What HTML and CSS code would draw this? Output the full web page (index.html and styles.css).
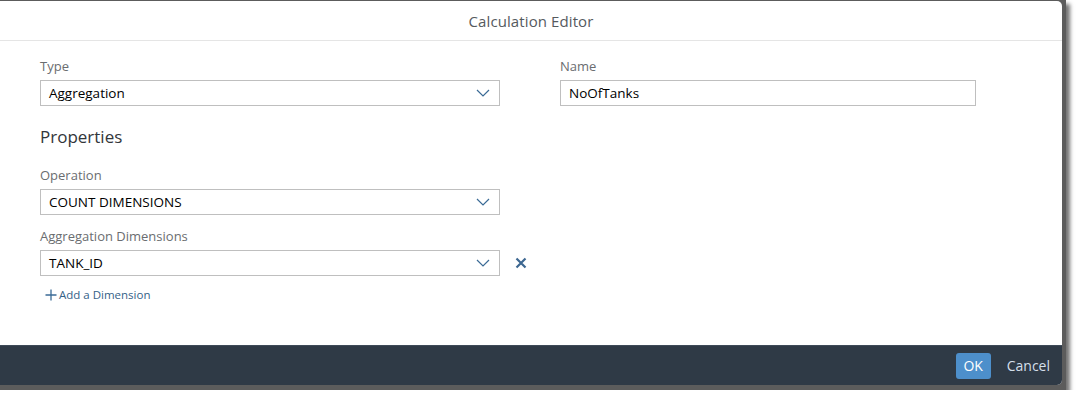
FILE: index.html
```html
<!DOCTYPE html>
<html>
<head>
<meta charset="utf-8">
<link rel="stylesheet" href="styles.css">
</head>
<body>
<div class="backdrop">
  <div class="dialog">
    <div class="header">Calculation Editor</div>
    <div class="content">
      <div class="row">
        <div class="field type-field">
          <div class="label">Type</div>
          <div class="select">
            <span class="value">Aggregation</span>
            <svg class="chev" width="14" height="8" viewBox="0 0 14 8"><path d="M1 1 L7 7 L13 1" fill="none" stroke="#3b6b96" stroke-width="1.2"/></svg>
          </div>
        </div>
        <div class="field name-field">
          <div class="label">Name</div>
          <div class="input"><span class="value">NoOfTanks</span></div>
        </div>
      </div>
      <h2 class="section">Properties</h2>
      <div class="field op-field">
        <div class="label">Operation</div>
        <div class="select">
          <span class="value">COUNT DIMENSIONS</span>
          <svg class="chev" width="14" height="8" viewBox="0 0 14 8"><path d="M1 1 L7 7 L13 1" fill="none" stroke="#3b6b96" stroke-width="1.2"/></svg>
        </div>
      </div>
      <div class="field dim-field">
        <div class="label">Aggregation Dimensions</div>
        <div class="dim-row">
          <div class="select">
            <span class="value">TANK_ID</span>
            <svg class="chev" width="14" height="8" viewBox="0 0 14 8"><path d="M1 1 L7 7 L13 1" fill="none" stroke="#3b6b96" stroke-width="1.2"/></svg>
          </div>
          <svg class="remove" width="12" height="12" viewBox="0 0 12 12"><path d="M1.5 1.5 L10.5 10.5 M10.5 1.5 L1.5 10.5" fill="none" stroke="#3d6791" stroke-width="2.2"/></svg>
        </div>
      </div>
      <div class="add-link">
        <svg width="12" height="12" viewBox="0 0 12 12"><path d="M6 0.5 V11.5 M0.5 6 H11.5" fill="none" stroke="#3b6b96" stroke-width="1.3"/></svg>
        <span>Add a Dimension</span>
      </div>
    </div>
    <div class="footer">
      <button class="btn-ok">OK</button>
      <button class="btn-cancel">Cancel</button>
    </div>
  </div>
</div>
</body>
</html>
```

FILE: styles.css
```css
html, body {
  margin: 0;
  padding: 0;
  background: #ffffff;
}
body {
  font-family: "Open Sans", "Noto Sans", sans-serif;
  color: #32363a;
}
.backdrop {
  width: 1066px;
  height: 390px;
  padding-top: 1px;
  box-sizing: border-box;
  background: #5c5c5c;
  box-shadow: 4px 4px 4px rgba(0, 0, 0, 0.55);
}
.dialog {
  width: 1062px;
  height: 384px;
  background: #ffffff;
  border-radius: 0 5px 5px 0;
  display: flex;
  flex-direction: column;
  overflow: hidden;
}
.header {
  height: 39px;
  border-bottom: 1px solid #e5e5e5;
  display: flex;
  align-items: center;
  justify-content: center;
  font-size: 15px;
  color: #555a5e;
  letter-spacing: 0.1px;
}
.content {
  flex: 1;
  padding: 15px 40px 0 40px;
}
.row {
  display: flex;
  gap: 60px;
}
.field {
  display: flex;
  flex-direction: column;
}
.label {
  font-size: 13px;
  color: #6a6d70;
  height: 19px;
  line-height: 21px;
  margin-bottom: 5px;
}
.select, .input {
  box-sizing: border-box;
  height: 26px;
  border: 1px solid #bfbfbf;
  display: flex;
  align-items: center;
  padding: 0 9px 0 8px;
  font-size: 13.5px;
  color: #000000;
}
.select {
  width: 460px;
  justify-content: space-between;
}
.input {
  width: 416px;
}
.section {
  margin: 19px 0 0 0;
  height: 24px;
  line-height: 24px;
  font-size: 17px;
  font-weight: normal;
  color: #32363a;
}
.op-field {
  margin-top: 16px;
}
.dim-field {
  margin-top: 11px;
}
.dim-row {
  display: flex;
  align-items: center;
  gap: 15px;
}
.add-link {
  margin-top: 11px;
  margin-left: 5px;
  display: flex;
  align-items: center;
  gap: 2px;
  font-size: 11.5px;
  color: #346187;
}
.footer {
  height: 40px;
  background: #2f3a46;
  border-top: 1px solid #3e4a58;
  box-sizing: border-box;
  display: flex;
  align-items: center;
  justify-content: flex-end;
  padding-right: 7px;
  gap: 11px;
}
.footer button {
  font-family: inherit;
  font-size: 14px;
  border: none;
  cursor: pointer;
}
.btn-ok {
  background: #4d8fcb;
  color: #ffffff;
  width: 35px;
  height: 26px;
  border-radius: 3px;
  padding: 0;
}
.btn-cancel {
  background: transparent;
  color: #d4dfea;
  padding: 0 5px;
  height: 26px;
}
```
